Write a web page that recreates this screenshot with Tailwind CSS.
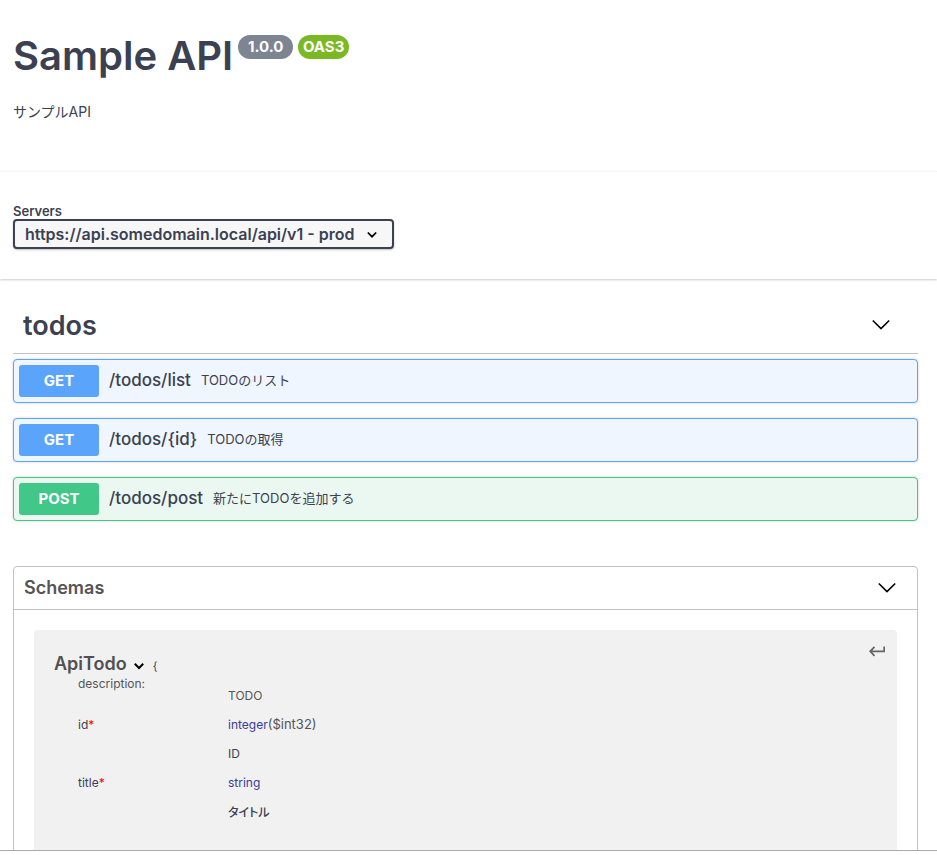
<!DOCTYPE html>
<html lang="ja">
  <head>
    <meta charset="UTF-8" />
    <meta name="viewport" content="width=device-width, initial-scale=1" />
    <title>Sample API</title>
    <script src="https://cdn.jsdelivr.net/npm/@tailwindcss/browser@4"></script>
  </head>
  <body
    class="flex h-screen flex-col overflow-hidden bg-white pb-1 font-['Inter','Noto_Sans_CJK_JP',sans-serif] text-[#3b4151]"
  >
    <main class="min-h-0 flex-1 overflow-hidden border-b border-[#aaa]">
      <!-- Title -->
      <header class="pt-8 pr-[19px] pb-[49px] pl-[13px]">
        <div class="flex items-start gap-[5px]">
          <h1 class="text-[40px] leading-[48px] font-semibold">Sample API</h1>
          <div class="mt-[3px] flex gap-[5px] text-[15px] leading-6 font-bold text-white">
            <span class="w-[55px] rounded-full bg-[#7d8492] text-center">1.0.0</span>
            <span class="w-[51px] rounded-full bg-[#7ab824] text-center">OAS3</span>
          </div>
        </div>
        <p class="mt-[22px] text-sm leading-5">サンプルAPI</p>
      </header>

      <!-- Servers -->
      <section
        class="flex flex-col items-start border-t border-[#f5f5f5] pt-[31px] pr-[19px] pb-[30px] pl-[13px] shadow-[0_1px_2px_rgba(0,0,0,0.2)]"
      >
        <label for="servers" class="text-[13px] leading-4 font-semibold">Servers</label>
        <div class="relative">
          <select
            id="servers"
            class="h-[30px] w-[381px] appearance-none rounded-sm border-2 border-[#3b4151] bg-[#f7f7f7] pl-[10px] text-base leading-5 font-semibold shadow-[0_1px_2px_rgba(0,0,0,0.25)]"
          >
            <option>https://api.somedomain.local/api/v1 - prod</option>
          </select>
          <svg
            class="pointer-events-none absolute top-3 right-[17px] h-2 w-[10px] fill-none stroke-black stroke-[1.7]"
            viewBox="0 0 10 8"
          >
            <path d="M0.8 1.5 5 5.7 9.2 1.5" />
          </svg>
        </div>
      </section>

      <div class="pr-[19px] pl-[13px]">
        <!-- Operations -->
        <section class="mt-5">
          <div class="flex h-[55px] items-center justify-between border-b border-[#bfc1c4] pr-7 pl-[10px]">
            <h2 class="text-[27px] leading-8 font-semibold">todos</h2>
            <button type="button" aria-label="Collapse todos" class="pb-[2px]">
              <svg class="h-3 w-[18px] fill-none stroke-black stroke-[1.6]" viewBox="0 0 18 12">
                <path d="M0.8 1.5 9 9.6 17.2 1.5" />
              </svg>
            </button>
          </div>
          <div class="mt-[5px] space-y-[15px]">
            <button
              type="button"
              class="flex h-11 w-full items-center rounded border border-[#5aa4fc] bg-[#eff6ff] px-[5px] text-left shadow-[0_0_3px_rgba(0,0,0,0.19)]"
            >
              <span class="w-20 rounded-[3px] bg-[#5aa4fc] text-center text-[15px] leading-8 font-bold text-white">GET</span>
              <span class="ml-[10px] text-[17px] font-medium">/todos/list</span>
              <span class="ml-[10px] text-[13px]">TODOのリスト</span>
            </button>
            <button
              type="button"
              class="flex h-11 w-full items-center rounded border border-[#5aa4fc] bg-[#eff6ff] px-[5px] text-left shadow-[0_0_3px_rgba(0,0,0,0.19)]"
            >
              <span class="w-20 rounded-[3px] bg-[#5aa4fc] text-center text-[15px] leading-8 font-bold text-white">GET</span>
              <span class="ml-[10px] text-[17px] font-medium">/todos/{id}</span>
              <span class="ml-[10px] text-[13px]">TODOの取得</span>
            </button>
            <button
              type="button"
              class="flex h-11 w-full items-center rounded border border-[#41c787] bg-[#eaf8f1] px-[5px] text-left shadow-[0_0_3px_rgba(0,0,0,0.19)]"
            >
              <span class="w-20 rounded-[3px] bg-[#41c787] text-center text-[15px] leading-8 font-bold text-white">POST</span>
              <span class="ml-[10px] text-[17px] font-medium">/todos/post</span>
              <span class="ml-[10px] text-[13px]">新たにTODOを追加する</span>
            </button>
          </div>
        </section>

        <!-- Schemas -->
        <section class="mt-[45px] rounded border border-[#bfc1c4] pb-5">
          <div class="flex h-[43px] items-center justify-between border-b border-[#bfc1c4] pr-[21px] pl-[10px]">
            <h2 class="text-lg font-semibold text-[#555]">Schemas</h2>
            <button type="button" aria-label="Collapse schemas">
              <svg class="h-3 w-[18px] fill-none stroke-black stroke-[1.6]" viewBox="0 0 18 12">
                <path d="M0.8 1.5 9 9.6 17.2 1.5" />
              </svg>
            </button>
          </div>
          <div class="relative mx-5 mt-5 rounded bg-[#f1f1f1] px-5 pt-6 pb-10 text-xs">
            <button type="button" aria-label="Jump to schema" class="absolute top-[15px] right-3">
              <svg class="h-3 w-4 fill-none stroke-[#666] stroke-[1.8]" viewBox="0 0 16 12">
                <path d="M15.2 1.5V6.3H1.5M5.5 1.8 1.2 6.3 5.5 10.8" />
              </svg>
            </button>
            <div class="flex h-5 items-center">
              <h3 class="text-lg font-semibold text-[#505050]">ApiTodo</h3>
              <svg class="mt-1 ml-[7px] h-2 w-[10px] fill-none stroke-black stroke-2" viewBox="0 0 10 8">
                <path d="M0.8 1.8 5 6 9.2 1.8" />
              </svg>
              <span class="mt-1 ml-[9px] text-[11px]">{</span>
            </div>
            <table class="ml-6 leading-[17px]">
              <tbody>
                <tr class="align-top text-[#555]">
                  <td class="w-[150px] pt-px">description:</td>
                  <td class="pt-[13px]">TODO</td>
                </tr>
                <tr class="align-top">
                  <td class="pt-3">id<span class="text-[#f00]">*</span></td>
                  <td class="pt-3">
                    <span class="text-[#3b3b9b]">integer</span><span class="text-[13px] text-[#555]">($int32)</span>
                    <p class="mt-3">ID</p>
                  </td>
                </tr>
                <tr class="align-top">
                  <td class="pt-3">title<span class="text-[#f00]">*</span></td>
                  <td class="pt-3">
                    <span class="text-[#3b3b9b]">string</span>
                    <p class="mt-[13px] font-medium [font-feature-settings:'palt']">タイトル</p>
                  </td>
                </tr>
              </tbody>
            </table>
          </div>
        </section>
      </div>
    </main>
  </body>
</html>
